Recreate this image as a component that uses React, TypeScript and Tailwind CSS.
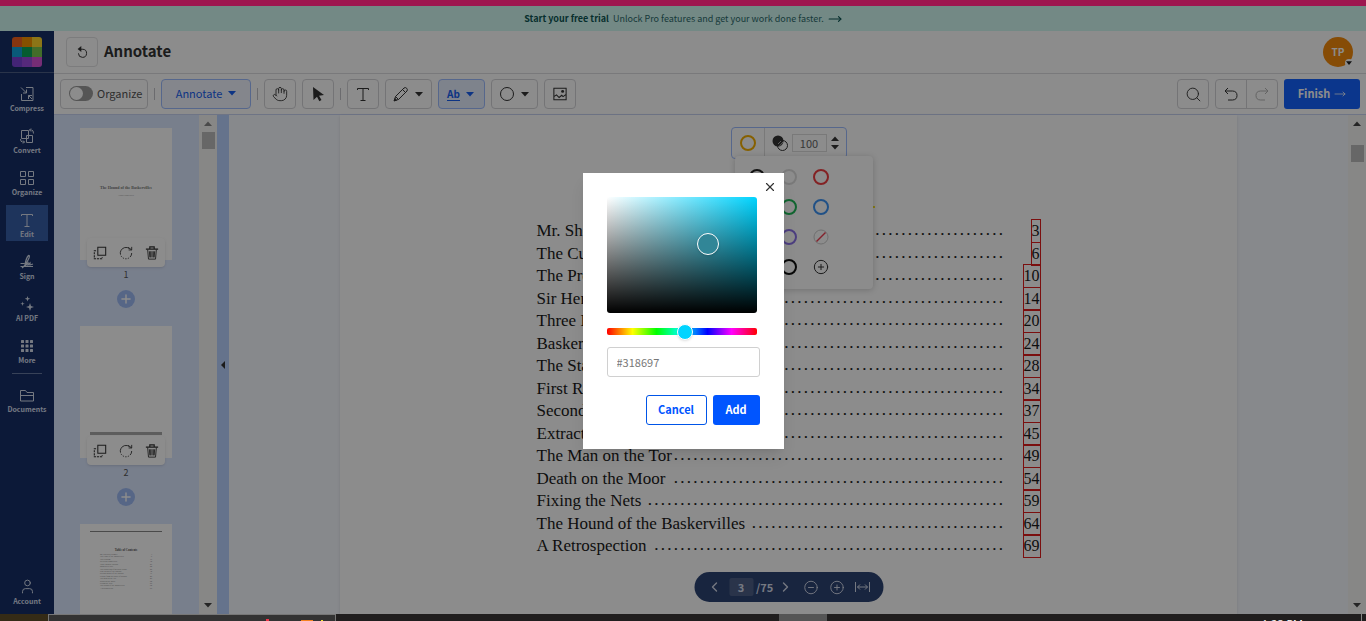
import { useState, type ReactNode } from "react";
import { ChevronLeft, ChevronRight, CircleMinus, CirclePlus, Hand, MoveRight, Plus, Search, User, X } from "lucide-react";
import clsx from "clsx";

// title, page number, leader dots
const chapters: [string, string, number][] = [
  ["Mr. Sherlock Holmes", "3", 47],
  ["The Curse of the Baskervilles", "6", 39],
  ["The Problem", "10", 57],
  ["Sir Henry Baskerville", "14", 47],
  ["Three Broken Threads", "20", 46],
  ["Baskerville Hall", "24", 53],
  ["The Stapletons of Merripit House", "28", 35],
  ["First Report of Dr. Watson", "34", 42],
  ["Second Report of Dr. Watson", "37", 39],
  ["Extract from the Diary of Watson", "45", 34],
  ["The Man on the Tor", "49", 51],
  ["Death on the Moor", "54", 51],
  ["Fixing the Nets", "59", 55],
  ["The Hound of the Baskervilles", "64", 39],
  ["A Retrospection", "69", 54],
];

function Icon({ children, size = 16, className }: { children: ReactNode; size?: number; className?: string }) {
  return (
    <svg
      width={size}
      height={size}
      viewBox="0 0 16 16"
      fill="none"
      stroke="currentColor"
      strokeWidth="1"
      className={clsx("shrink-0", className)}
      aria-hidden="true"
    >
      {children}
    </svg>
  );
}

const CompressIcon = () => (
  <Icon>
    <path d="M7 1.500h7v13H2.500V8M2 1.500l5.500 5.500M7.500 3.500V7H4M13 13L9.500 9.500M9.500 13V9.500H13" />
  </Icon>
);

const ConvertIcon = () => (
  <Icon>
    <path d="M2.500 2.500h7v8h-7zM7.500 7.500h6v7h-6zM10.500 2h2q2 0 2 3.500M12 .5L10.500 2 12 3.500M5.500 14H3.500q-2 0-2-3M4 12.500L5.500 14 4 15.500" />
  </Icon>
);

const GridIcon = () => (
  <Icon>
    <path d="M1.500 1.500h5v5h-5zM9.500 1.500h5v5h-5zM1.500 9.500h5v5h-5zM9.500 9.500h5v5h-5z" />
  </Icon>
);

const TextIcon = () => (
  <Icon>
    <path d="M2.500 4V2.500h11V4M8 2.500v12M5.500 14.500h5" />
  </Icon>
);

const SignIcon = () => (
  <Icon>
    <path d="M1.500 9.500h4M1.500 12.500h12.500M3 14q4-3 7-10 1-3-.5-2.500Q7 4 6 11q0 2 2-1l1-1v2l2-2v2l3-1" strokeWidth="1.200" />
  </Icon>
);

const SparkleIcon = () => (
  <Icon>
    <path
      d="M11 7l1 3 3 1-3 1-1 3-1-3-3-1 3-1zM8.500 0l.7 2 2 .7-2 .7-.7 2.100-.7-2.100-2-.7 2-.7zM3.500 5.500l.5 1.700 1.700.5-1.700.5-.5 1.700L3 8.200l-1.700-.5L3 7.200z"
      fill="currentColor"
      stroke="none"
    />
  </Icon>
);

const DotsIcon = () => (
  <Icon>
    {[2, 6.5, 11].map((y) => [2, 6.5, 11].map((x) => <rect key={`${x}-${y}`} x={x} y={y} width="3" height="3" rx="0.5" fill="currentColor" stroke="none" />))}
  </Icon>
);

const FolderIcon = () => (
  <Icon>
    <path d="M1.500 14V3.500h5l1.500 2h6.500V14zM1.500 8.500h13" />
  </Icon>
);

const CopyIcon = () => (
  <Icon size={14}>
    <path d="M5.500 1.500h9v9h-9z" strokeWidth="1.200" />
    <path d="M3.500 5.500h-2v9h9v-2" strokeDasharray="2.500 1" strokeWidth="1.200" />
  </Icon>
);

const RotateIcon = () => (
  <Icon size={14}>
    <path d="M12 3A6.500 6.500 0 1 0 14.500 8" strokeDasharray="16 1.500 1.500 1.500 1.500 1.500 1.500 1.500 1.500 1.500" />
    <path d="M11 4.500h3.500V1M10.500 1.500l4 3" />
  </Icon>
);

const TrashIcon = () => (
  <Icon size={14}>
    <path d="M1 3.500h14M5.500 3V1h5v2" strokeWidth="1.400" />
    <path d="M3 4l1 11h8l1-11M6.500 6v7M8 6v7M9.500 6v7M5 6l.5 7M11 6l-.5 7" />
  </Icon>
);

const UndoIcon = ({ flip }: { flip?: boolean }) => (
  <Icon className={flip ? "-scale-x-100" : ""}>
    <path d="M5 2L2 5l3 3M2 5h7.500q4.500.2 4.500 4.500T9.500 14H5" />
  </Icon>
);

const ResetIcon = () => (
  <Icon size={13}>
    <path d="M6 4h2.500a5 5 0 1 1-5.500 5" strokeWidth="1.200" />
    <path d="M6.500 0v7.500L2 3.800z" fill="currentColor" stroke="none" />
  </Icon>
);

const CursorIcon = () => (
  <Icon>
    <path d="M3 1l11 8-5 .7 2.500 4.300-2.200 1.200L7 10.800 3.500 14z" fill="currentColor" stroke="none" />
  </Icon>
);

const PencilIcon = () => (
  <Icon>
    <path d="M1.500 14.500l1-4L11 2q1.500-1 2.700.3t.3 2.700l-8.500 8.500zM9.500 3.500l3 3M2.500 10.500l3 3" />
    <path d="M1 15l.8-2.500 1.700 1.700z" fill="currentColor" />
  </Icon>
);

const ImageIcon = () => (
  <Icon size={14}>
    <path d="M1 1.500h14v13H1zM1 11l3-2 3 3 3-2.500 1.500 1.500L15 8.500" strokeWidth="1.200" />
    <circle cx="11" cy="5" r="1.700" fill="currentColor" stroke="none" />
  </Icon>
);

const FitIcon = () => (
  <Icon>
    <path d="M1 3v10M15 3v10M3 8h10M5.500 5.500L3 8l2.500 2.500M10.500 5.500L13 8l-2.500 2.500" />
  </Icon>
);

const Caret = ({ up }: { up?: boolean }) => (
  <svg width="8" height="5" viewBox="0 0 8 5" className={clsx("shrink-0", up && "rotate-180")} aria-hidden="true">
    <path d="M0 0h8L4 4.500z" fill="currentColor" />
  </svg>
);

function NavItem({ label, icon, active }: { label: string; icon: ReactNode; active?: boolean }) {
  return (
    <a
      href="#"
      className={clsx(
        "flex h-9 w-[42px] flex-col items-center justify-end gap-px pb-0.5 text-[7px] leading-[10px] font-bold whitespace-nowrap",
        active && "bg-[#385fa8]"
      )}
    >
      {icon}
      <span>{label}</span>
    </a>
  );
}

function ToolButton({ label, children, menu, active }: { label: string; children: ReactNode; menu?: boolean; active?: boolean }) {
  return (
    <button
      type="button"
      aria-label={label}
      className={clsx(
        "flex h-[30px] items-center justify-center rounded-sm border",
        menu ? "w-[47px] gap-1.5 pr-0.5" : "w-8",
        active ? "border-[#9dbcff] bg-[#e6eeff] text-[#1860f0]" : "border-[#d4d4d8]"
      )}
    >
      {children}
      {menu && <Caret />}
    </button>
  );
}

const Separator = () => <span className="h-3 w-px bg-[#c4c4c8]" />;

function Scrollbar({ offset }: { offset: "near" | "far" }) {
  return (
    <div
      className={clsx(
        "flex w-[18px] shrink-0 flex-col items-center bg-[#f6f6f4] pt-[6px] pb-[6px]",
        offset === "near" ? "text-[#888]" : "text-[#444]"
      )}
    >
      <Caret up />
      <div className={clsx("h-[17px] w-[13px] bg-[#bcbcbc]", offset === "near" ? "mt-[6px]" : "mt-[19px]")} />
      <div className="mt-auto text-[#444]">
        <Caret />
      </div>
    </div>
  );
}

function Thumbnail({ page, children }: { page: number; children?: ReactNode }) {
  return (
    <div className="flex flex-col items-center">
      <div className="h-[132px] w-[92px] bg-white">{children}</div>
      <div className="z-10 -mt-[22px] flex h-[29px] w-[78px] items-center justify-between rounded-sm bg-white px-1.5 shadow-sm">
        <button type="button" aria-label={`Duplicate page ${page}`}><CopyIcon /></button>
        <button type="button" aria-label={`Rotate page ${page}`}><RotateIcon /></button>
        <button type="button" aria-label={`Delete page ${page}`}><TrashIcon /></button>
      </div>
      <span className="text-[9px] leading-4 text-[#555]">{page}</span>
      <button type="button" aria-label="Insert page" className="mt-[7px] mb-[18px] flex size-[18px] items-center justify-center rounded-full bg-[#9dbaf5] text-white">
        <Plus size={14} strokeWidth={2.5} />
      </button>
    </div>
  );
}

const swatches = [
  { name: "Black", ring: "border-[#222]" },
  { name: "White", ring: "border-[#ddd]" },
  { name: "Red", ring: "border-[#ef3e42]" },
  { name: "Yellow", ring: "border-[#f5b000]" },
  { name: "Green", ring: "border-[#1fb858]" },
  { name: "Blue", ring: "border-[#3d94f5]" },
  { name: "Pink", ring: "border-[#e55bb0]" },
  { name: "Purple", ring: "border-[#8b72e8]" },
];

function StylePopup() {
  return (
    <div className="absolute top-3 left-1/2 w-[116px] -translate-x-1/2">
      <div className="flex h-8 rounded-sm border border-[#9dbcff] bg-white">
        <button type="button" aria-label="Colour" className="flex w-[33px] items-center justify-center border-r border-[#ddd]">
          <span className="size-4 rounded-full border-2 border-[#f5b000]" />
        </button>
        <div className="flex flex-1 items-center justify-between pr-[7px] pl-[7px]">
          <Icon>
            <circle cx="6" cy="6" r="5.500" fill="currentColor" stroke="none" />
            <circle cx="10.500" cy="10.500" r="5" />
            <path d="M6 9l3-3M7 11.500L11 7" stroke="#aaa" />
          </Icon>
          <input aria-label="Opacity" defaultValue="100" className="h-[18px] w-[35px] border border-[#ddd] pb-px text-center text-[11px] text-[#666]" />
          <span className="flex flex-col gap-1">
            <Caret up />
            <Caret />
          </span>
        </div>
      </div>
      <div className="absolute top-[29px] left-1 grid w-[138px] grid-cols-[32px_32px_32px] rounded-sm bg-white pt-1.5 pb-[7px] pl-1.5 shadow-[0_1px_6px_rgba(0,0,0,0.2)]">
        {swatches.map((s) => (
          <button key={s.name} type="button" aria-label={s.name} className="flex h-[30px] items-center justify-center">
            <span className={clsx("size-4 rounded-full border-2", s.ring)} />
          </button>
        ))}
        <button type="button" aria-label="No colour" className="flex h-[30px] items-center justify-center text-[#ccc]">
          <Icon>
            <circle cx="8" cy="8" r="7" />
            <path d="M3.500 12.500l9-9" stroke="#ef3e52" strokeWidth="1.500" />
          </Icon>
        </button>
        <button type="button" aria-label="Orange" className="flex h-[30px] items-center justify-center">
          <span className="size-4 rounded-full border-2 border-[#f58a00]" />
        </button>
        <button type="button" aria-label="Custom black" className="flex h-[30px] items-center justify-center">
          <span className="size-4 rounded-full border-2 border-[#111]" />
        </button>
        <button type="button" aria-label="Add colour" className="flex h-[30px] items-center justify-center">
          <CirclePlus size={16} strokeWidth={1.5} />
        </button>
      </div>
    </div>
  );
}

function ColorDialog() {
  const [hue, setHue] = useState(189);
  return (
    <div role="dialog" aria-label="Add colour" className="relative w-[201px] bg-white p-6 shadow-lg">
      <button type="button" aria-label="Close" className="absolute top-1.5 right-1.5 flex size-4 items-center justify-center text-[#333]">
        <X size={14} strokeWidth={2} />
      </button>
      <div className="relative h-[116px] w-[150px] rounded-[3px] bg-[linear-gradient(to_top,#000,transparent),linear-gradient(to_right,#fff,#00d4ff)]">
        <span className="absolute top-9 left-[90px] size-[22px] rounded-full border border-white bg-[#318697] shadow-sm" />
      </div>
      <input
        type="range"
        aria-label="Hue"
        min={0}
        max={360}
        value={hue}
        onChange={(e) => setHue(Number(e.target.value))}
        className="mt-[15px] block h-[7px] w-[150px] appearance-none rounded-[2px] bg-[linear-gradient(to_right,#f00,#ff0_17%,#0f0_33%,#0ff_50%,#00f_67%,#f0f_83%,#f00)] [&::-webkit-slider-thumb]:size-4 [&::-webkit-slider-thumb]:appearance-none [&::-webkit-slider-thumb]:rounded-full [&::-webkit-slider-thumb]:border [&::-webkit-slider-thumb]:border-white [&::-webkit-slider-thumb]:bg-[#00d4ff] [&::-webkit-slider-thumb]:shadow"
      />
      <input
        aria-label="Hex colour"
        defaultValue="#318697"
        className="mt-3 block h-[30px] w-full rounded-[3px] border border-[#d0d0d0] px-[9px] pb-px text-[11px] text-[#777]"
      />
      <div className="mt-[18px] flex justify-end gap-1.5 text-[11px] font-bold">
        <button type="button" className="h-[30px] w-[61px] rounded-[3px] border border-[#0055e8] pb-px text-[#0055ff]">Cancel</button>
        <button type="button" className="h-[30px] w-[47px] rounded-[3px] bg-[#0055ff] pb-px text-white">Add</button>
      </div>
    </div>
  );
}

function Sidebar() {
  return (
    <nav className="flex w-[54px] shrink-0 flex-col items-center bg-[#162f66] pb-1.5 text-[#d5dcec]">
      <div className="flex h-[42px] w-full items-center justify-center border-b border-[#4d6088]">
        <div className="grid size-[30px] grid-cols-3 overflow-hidden rounded-[3px]">
          <span className="bg-[#f4611e]" />
          <span className="bg-[#f59300]" />
          <span className="bg-[#ffd52b]" />
          <span className="bg-[#12a5dd]" />
          <span className="bg-[#0ca85a]" />
          <span className="bg-[#7bc74d]" />
          <span className="bg-[#7a42d8]" />
          <span className="bg-[#9c4be0]" />
          <span className="bg-[#d852d8]" />
        </div>
      </div>
      <div className="mt-1.5 flex flex-col items-center gap-1.5">
        <NavItem label="Compress" icon={<CompressIcon />} />
        <NavItem label="Convert" icon={<ConvertIcon />} />
        <NavItem label="Organize" icon={<GridIcon />} />
        <NavItem label="Edit" icon={<TextIcon />} active />
        <NavItem label="Sign" icon={<SignIcon />} />
        <NavItem label="AI PDF" icon={<SparkleIcon />} />
        <NavItem label="More" icon={<DotsIcon />} />
        <span className="h-px w-[30px] bg-[#6678a0]" />
        <NavItem label="Documents" icon={<FolderIcon />} />
      </div>
      <div className="mt-auto">
        <NavItem label="Account" icon={<User size={17} strokeWidth={1.4} />} />
      </div>
    </nav>
  );
}

function Toolbar() {
  return (
    <div className="flex h-[41px] items-center gap-1.5 border-b border-[#c9d3f2] px-1.5">
      <label className="flex h-[30px] w-[88px] items-center gap-1 rounded-sm border border-[#d4d4d8] pb-px pl-2 text-[11px] text-[#555]">
        <input type="checkbox" className="peer sr-only" />
        <span className="flex h-[15px] w-6 shrink-0 items-center rounded-full bg-[#9b9b9b] p-px">
          <span className="size-[13px] rounded-full bg-white" />
        </span>
        Organize
      </label>
      <Separator />
      <button type="button" className="flex h-[30px] w-[90px] items-center justify-center gap-1.5 rounded-sm border border-[#9dbcff] bg-[#f0f5ff] pb-px text-[11px] text-[#1860f0]">
        Annotate
        <Caret />
      </button>
      <Separator />
      <ToolButton label="Pan"><Hand size={16} strokeWidth={1.3} /></ToolButton>
      <ToolButton label="Select"><CursorIcon /></ToolButton>
      <Separator />
      <ToolButton label="Text"><TextIcon /></ToolButton>
      <ToolButton label="Draw" menu><PencilIcon /></ToolButton>
      <ToolButton label="Highlight" menu active>
        <span className="border-b border-current text-[10px] leading-3 font-bold">Ab</span>
      </ToolButton>
      <ToolButton label="Shape" menu>
        <Icon><circle cx="8" cy="8" r="6.500" /></Icon>
      </ToolButton>
      <ToolButton label="Image"><ImageIcon /></ToolButton>
      <div className="ml-auto flex gap-1.5">
        <ToolButton label="Search"><Search size={17} strokeWidth={1.3} /></ToolButton>
        <div className="flex h-[30px] w-[63px] rounded-sm border border-[#d4d4d8]">
          <button type="button" aria-label="Undo" className="flex flex-1 items-center justify-center border-r border-[#d4d4d8]"><UndoIcon /></button>
          <button type="button" aria-label="Redo" disabled className="flex flex-1 items-center justify-center text-[#b5b5b5]"><UndoIcon flip /></button>
        </div>
        <button type="button" className="flex h-[30px] w-[76px] items-center justify-center gap-1 rounded-[3px] bg-[#1463ff] pb-px text-[11px] font-bold text-white">
          Finish
          <MoveRight size={12} strokeWidth={1.5} />
        </button>
      </div>
    </div>
  );
}

function Thumbnails() {
  return (
    <aside className="flex w-[175px] shrink-0">
      <div className="flex flex-1 flex-col items-center overflow-hidden bg-[#dbe7ff] pt-[13px] pr-px">
        <Thumbnail page={1}>
          <p className="pt-[56px] text-center font-['Liberation_Serif',serif] text-[4px] leading-[7px] font-bold whitespace-nowrap text-[#777]">
            The Hound of the Baskervilles
          </p>
          <p className="text-center font-['Liberation_Serif',serif] text-[2px] leading-[8px] text-[#888]">Arthur Conan Doyle</p>
        </Thumbnail>
        <Thumbnail page={2}>
          <div className="mx-2.5 pt-[106px]">
            <div className="h-[3px] bg-[#aaa]" />
            <div className="mt-[2px] h-px bg-[#ccc]" />
          </div>
        </Thumbnail>
        <div className="h-[132px] w-[92px] shrink-0 bg-white px-2.5 pt-[7px]">
          <div className="h-px bg-[#888]" />
          <p className="mt-[16px] text-center font-['Liberation_Serif',serif] text-[3px] leading-[4px] font-bold text-[#555]">Table of Contents</p>
          <ol className="mx-2.5 mt-px flex h-[36px] flex-col justify-between font-['Liberation_Serif',serif] text-[2px] leading-[2px] text-[#777]">
            {chapters.map(([title, page]) => (
              <li key={page} className="flex justify-between">
                <span>{title}</span>
                <span>{page}</span>
              </li>
            ))}
          </ol>
        </div>
      </div>
      <Scrollbar offset="near" />
      <button type="button" aria-label="Collapse panel" className="flex w-3 items-center justify-center bg-[#b9d1ff]">
        <svg width="4" height="8" viewBox="0 0 4 8" aria-hidden="true">
          <path d="M4 0v8L0 4z" fill="currentColor" />
        </svg>
      </button>
    </aside>
  );
}

function DocumentPage() {
  return (
    <main className="relative flex min-w-0 flex-1 bg-[#f6f9ff]">
      <div className="relative mx-[111px] flex-1 bg-white pt-[105px] shadow-sm">
        <span className="absolute top-[91px] left-1/2 h-[2px] w-[86px] bg-[#f5e02b]" />
        <ol className="mx-auto flex h-[337px] w-[504px] flex-col justify-between font-['Liberation_Serif',serif] text-[17px] leading-[22px] text-[#1a1a1a]">
          {chapters.map(([title, page, dots]) => (
            <li key={page} className="flex whitespace-nowrap">
              <span>{title}</span>
              <span aria-hidden="true" className="ml-auto text-[13px] font-bold">
                {". ".repeat(dots)}
              </span>
              <span className="ml-5 flex w-[18px] shrink-0 justify-end">
                <a href="#" className="-my-px border border-[#e01c1c] text-[16px]">{page}</a>
              </span>
            </li>
          ))}
        </ol>
        <StylePopup />
        <div className="absolute bottom-3 left-1/2 flex h-[30px] w-[189px] -translate-x-1/2 items-center rounded-full bg-[#2d4473] pr-[13px] pl-3 text-[#d5dcec]">
          <button type="button" aria-label="Previous page"><ChevronLeft size={16} strokeWidth={2} /></button>
          <input aria-label="Page" defaultValue="3" className="ml-[7px] h-[18px] w-6 rounded-[2px] bg-[#4d6088] text-center text-[11px] font-bold" />
          <span className="ml-[3px] text-[11px] font-bold">/75</span>
          <button type="button" aria-label="Next page" className="ml-auto"><ChevronRight size={16} strokeWidth={2} /></button>
          <button type="button" aria-label="Zoom out" className="ml-2.5"><CircleMinus size={15} strokeWidth={1.5} /></button>
          <button type="button" aria-label="Zoom in" className="ml-[11px]"><CirclePlus size={15} strokeWidth={1.5} /></button>
          <button type="button" aria-label="Fit width" className="ml-2.5"><FitIcon /></button>
        </div>
      </div>
      <Scrollbar offset="far" />
    </main>
  );
}

function Taskbar() {
  return (
    <footer className="relative flex h-[7px] shrink-0 overflow-hidden bg-[#201e1e]">
      <div className="w-12 bg-[#352b16]" />
      <div className="flex w-[288px] justify-end border border-b-0 border-[#777] bg-[#333]">
        <span className="mt-1 mr-8 h-[3px] w-[3px] bg-[#f0354b]" />
        <span className="mt-[5px] mr-2 h-[2px] w-3 bg-[#f58220]" />
        <span className="mt-[5px] mr-3 h-[2px] w-[2px] bg-[#f5e02b]" />
      </div>
      <div className="ml-[443px] w-12 bg-[#555]" />
      <span className="mt-1 mr-[63px] ml-auto font-['Open_Sans',sans-serif] text-[11px] leading-3 text-white">1:28 PM</span>
      <span className="absolute inset-y-0 right-1 w-px bg-[#888]" />
    </footer>
  );
}

export default function App() {
  return (
    <div className="flex h-screen flex-col overflow-hidden font-['Noto_Sans_CJK_SC',sans-serif] text-[#333]">
      <div className="h-1.5 shrink-0 bg-[#9e164f]" />
      <div className="relative flex min-h-0 flex-1 flex-col">
        <div className="flex h-[25px] shrink-0 items-center justify-center gap-1 bg-[#d2f9f3] text-[9px] leading-4 text-[#2d6b6b]">
          <strong className="text-[#0d5754]">Start your free trial</strong>
          <a href="#" className="flex items-center gap-1">
            Unlock Pro features and get your work done faster.
            <MoveRight size={14} strokeWidth={2} className="text-[#0d5754]" />
          </a>
        </div>
        <div className="flex min-h-0 flex-1">
          <Sidebar />
          <div className="flex min-w-0 flex-1 flex-col bg-white">
            <header className="flex h-[43px] shrink-0 items-center border-b border-[#dcdce0] pr-[13px] pl-3">
              <button type="button" aria-label="Back" className="flex h-[30px] w-8 items-center justify-center rounded-sm border border-[#e2e2e4]">
                <ResetIcon />
              </button>
              <h1 className="ml-1.5 pb-0.5 text-[15px] leading-5 font-bold">Annotate</h1>
              <button type="button" className="relative ml-auto size-[30px] rounded-full bg-[#f58a0b] pb-0.5 text-[10px] font-bold text-white">
                TP
                <span className="absolute right-0 bottom-0 flex size-2 items-center justify-center rounded-full bg-white text-[#222]">
                  <svg width="6" height="4" viewBox="0 0 8 5" aria-hidden="true"><path d="M0 0h8L4 5z" fill="currentColor" /></svg>
                </span>
              </button>
            </header>
            <Toolbar />
            <div className="flex min-h-0 flex-1">
              <Thumbnails />
              <DocumentPage />
            </div>
          </div>
        </div>
        <div className="absolute inset-0 z-20 flex items-center justify-center bg-black/45 pt-0.5">
          <ColorDialog />
        </div>
      </div>
      <Taskbar />
    </div>
  );
}
